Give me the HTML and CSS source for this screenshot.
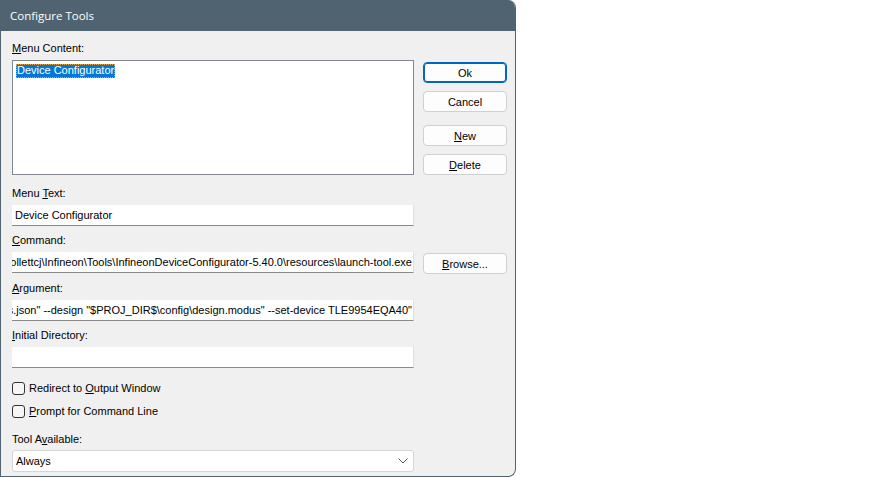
FILE: index.html
```html
<!DOCTYPE html>
<html lang="en">
<head>
    <meta charset="UTF-8">
    <meta name="viewport" content="width=device-width, initial-scale=1.0">
    <title>Configure Tools</title>
    <link rel="stylesheet" href="styles.css">
</head>
<body>
    <div class="dialog">
        <div class="titlebar">Configure Tools</div>
        <div class="content">
            <div class="label"><u>M</u>enu Content:</div>
            <div class="row row-list">
                <div class="listbox">
                    <div class="list-item selected">Device Configurator</div>
                </div>
                <div class="buttons">
                    <button class="btn default">Ok</button>
                    <button class="btn">Cancel</button>
                    <button class="btn btn-new"><u>N</u>ew</button>
                    <button class="btn"><u>D</u>elete</button>
                </div>
            </div>

            <div class="label first">Menu <u>T</u>ext:</div>
            <div class="row">
                <div class="field"><span>Device Configurator</span></div>
            </div>

            <div class="label"><u>C</u>ommand:</div>
            <div class="row">
                <div class="field scrolled"><span>C:\Users\collettcj\Infineon\Tools\InfineonDeviceConfigurator-5.40.0\resources\launch-tool.exe</span></div>
                <button class="btn btn-browse"><u>B</u>rowse...</button>
            </div>

            <div class="label"><u>A</u>rgument:</div>
            <div class="row">
                <div class="field scrolled"><span>--tool device-configurator --settings "$PROJ_DIR$\settings.json" --design "$PROJ_DIR$\config\design.modus" --set-device TLE9954EQA40"</span></div>
            </div>

            <div class="label"><u>I</u>nitial Directory:</div>
            <div class="row">
                <div class="field"></div>
            </div>

            <label class="check first-check"><span class="box"></span><span>Redirect to <u>O</u>utput Window</span></label>
            <label class="check"><span class="box"></span><span><u>P</u>rompt for Command Line</span></label>

            <div class="label tool">Tool A<u>v</u>ailable:</div>
            <div class="row">
                <div class="select">
                    <span>Always</span>
                    <svg width="10" height="6" viewBox="0 0 10 6"><path d="M0.5 0.5 L5 5 L9.5 0.5" fill="none" stroke="#555" stroke-width="1"/></svg>
                </div>
            </div>
        </div>
    </div>
</body>
</html>
```

FILE: styles.css
```css
body {
    margin: 0;
    padding: 0;
    background-color: #fff;
    font-family: "Liberation Sans", Arial, sans-serif;
    font-size: 11px;
    color: #000;
}
.dialog {
    width: 516px;
    height: 477px;
    box-sizing: border-box;
    border: 1px solid #4f6470;
    border-top: none;
    border-radius: 0 8px 8px 0;
    background-color: #f0f0f0;
    overflow: hidden;
    display: flex;
    flex-direction: column;
}
.titlebar {
    height: 31px;
    flex-shrink: 0;
    background-color: #4f6470;
    color: #fff;
    font-family: "Open Sans", sans-serif;
    font-size: 11.5px;
    display: flex;
    align-items: center;
    padding-left: 9px;
}
.content {
    padding: 11px 8px 0 11px;
}
.label {
    height: 13px;
    line-height: 13px;
    margin-bottom: 5px;
    margin-top: 8px;
}
.content > .label:first-child {
    margin-top: 0;
}
.label.first {
    margin-top: 12px;
}
.row {
    display: flex;
    align-items: flex-start;
    gap: 9px;
}
.row-list {
    height: 115px;
}
.listbox {
    width: 402px;
    height: 115px;
    box-sizing: border-box;
    border: 1px solid #828790;
    background-color: #fff;
    padding: 3px;
}
.list-item {
    display: inline-block;
    height: 14px;
    line-height: 13px;
    padding: 0 1px;
    box-sizing: border-box;
}
.list-item.selected {
    background-color: #0078d7;
    color: #fff;
    outline: 1px dotted #e8a33a;
    outline-offset: -1px;
}
.buttons {
    display: flex;
    flex-direction: column;
    padding-top: 2px;
}
.btn {
    width: 84px;
    height: 21px;
    box-sizing: border-box;
    border: 1px solid #d0d0d0;
    border-radius: 4px;
    background-color: #fdfdfd;
    font-family: "Liberation Sans", Arial, sans-serif;
    font-size: 11px;
    color: #000;
    padding: 0;
    margin-bottom: 8px;
}
.btn.default {
    border: 1px solid #0067c0;
    box-shadow: inset 0 0 0 1px #0067c0;
}
.btn-new {
    margin-top: 5px;
}
.btn-browse {
    margin-top: 1px;
    margin-bottom: 0;
}
.field {
    width: 402px;
    height: 21px;
    box-sizing: border-box;
    background-color: #fff;
    border-right: 1px solid #e0e0e0;
    border-bottom: 1px solid #8a8a8a;
    display: flex;
    align-items: center;
    padding: 0 3px;
    overflow: hidden;
    white-space: nowrap;
}
.field.scrolled {
    justify-content: flex-end;
    padding: 0 1px 0 2px;
}
.field span {
    flex-shrink: 0;
}
.check {
    display: flex;
    align-items: center;
    height: 13px;
    line-height: 13px;
    margin-top: 10px;
}
.check.first-check {
    margin-top: 14px;
}
.box {
    width: 13px;
    height: 13px;
    box-sizing: border-box;
    border: 1px solid #333;
    border-radius: 3px;
    background-color: #f6f6f6;
    margin-right: 4px;
}
.label.tool {
    margin-top: 15px;
    margin-bottom: 4px;
}
.select {
    width: 402px;
    height: 22px;
    box-sizing: border-box;
    border: 1px solid #d5d5d5;
    border-radius: 3px;
    background-color: #fff;
    display: flex;
    align-items: center;
    justify-content: space-between;
    padding: 0 5px 0 3px;
}
```
